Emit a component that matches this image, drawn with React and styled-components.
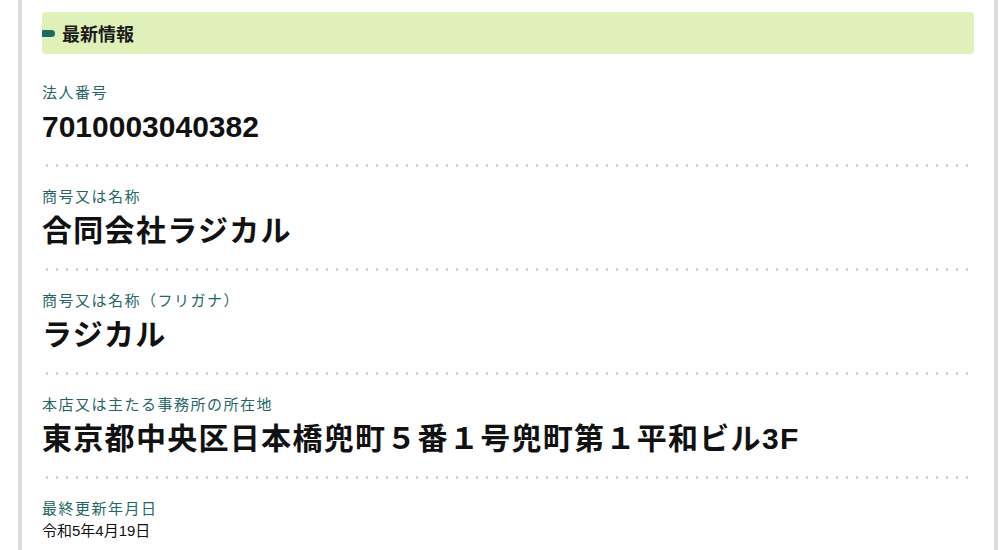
import React from "react";
import styled, { createGlobalStyle } from "styled-components";

const Global = createGlobalStyle`
  html, body {
    margin: 0;
    padding: 0;
    background: #ffffff;
  }
  body {
    font-family: "Noto Sans CJK JP", "Noto Sans", sans-serif;
    color: #111111;
  }
`;

const Frame = styled.div`
  margin: 0 6px 0 18px;
  border-left: 4px solid #dcdcdc;
  border-right: 4px solid #dcdcdc;
  padding: 12px 20px 0;
  min-height: 550px;
  box-sizing: border-box;
`;

const Heading = styled.div`
  display: flex;
  align-items: center;
  gap: 7px;
  height: 42px;
  background: #dff0b9;
  border-radius: 4px;
  margin-bottom: 9px;
`;

const Marker = styled.span`
  display: block;
  width: 13px;
  height: 7px;
  background: #1b6a62;
  border-radius: 1px 4px 4px 1px;
`;

const HeadingText = styled.h2`
  margin: 0;
  font-size: 18px;
  line-height: 22px;
  font-weight: 700;
  color: #1a1a1a;
`;

const List = styled.dl`
  margin: 0;
`;

const Item = styled.div`
  padding: 18px 0 17px;
  border-bottom: 2px solid transparent;
  background-image: radial-gradient(circle, #cfcfcf 1px, transparent 1.6px);
  background-size: 10px 3px;
  background-position: 0 100%;
  background-repeat: repeat-x;
  background-origin: border-box;
`;

const Label = styled.dt`
  margin: 0;
  font-size: 15px;
  line-height: 22px;
  color: #1f6666;
  letter-spacing: 1.5px;
`;

const Value = styled.dd`
  margin: ${(p) => (p.$small ? "0" : "3px 0 0")};
  font-family: "Liberation Sans", "Noto Sans CJK JP", sans-serif;
  font-size: ${(p) => (p.$small ? "15px" : "30px")};
  line-height: ${(p) => (p.$small ? "24px" : "42px")};
  font-weight: ${(p) => (p.$small ? 400 : 700)};
  letter-spacing: ${(p) => (p.$small ? "0" : p.$tight ? "0" : "1.3px")};
  color: #111111;
  white-space: nowrap;
`;

const rows = [
  { label: "法人番号", value: "7010003040382", tight: true },
  { label: "商号又は名称", value: "合同会社ラジカル" },
  { label: "商号又は名称（フリガナ）", value: "ラジカル" },
  { label: "本店又は主たる事務所の所在地", value: "東京都中央区日本橋兜町５番１号兜町第１平和ビル3F" },
  { label: "最終更新年月日", value: "令和5年4月19日", small: true },
];

export default function App() {
  return (
    <>
      <Global />
      <Frame>
        <Heading>
          <Marker />
          <HeadingText>最新情報</HeadingText>
        </Heading>
        <List>
          {rows.map((r) => (
            <Item key={r.label}>
              <Label>{r.label}</Label>
              <Value $small={r.small} $tight={r.tight}>
                {r.value}
              </Value>
            </Item>
          ))}
        </List>
      </Frame>
    </>
  );
}
